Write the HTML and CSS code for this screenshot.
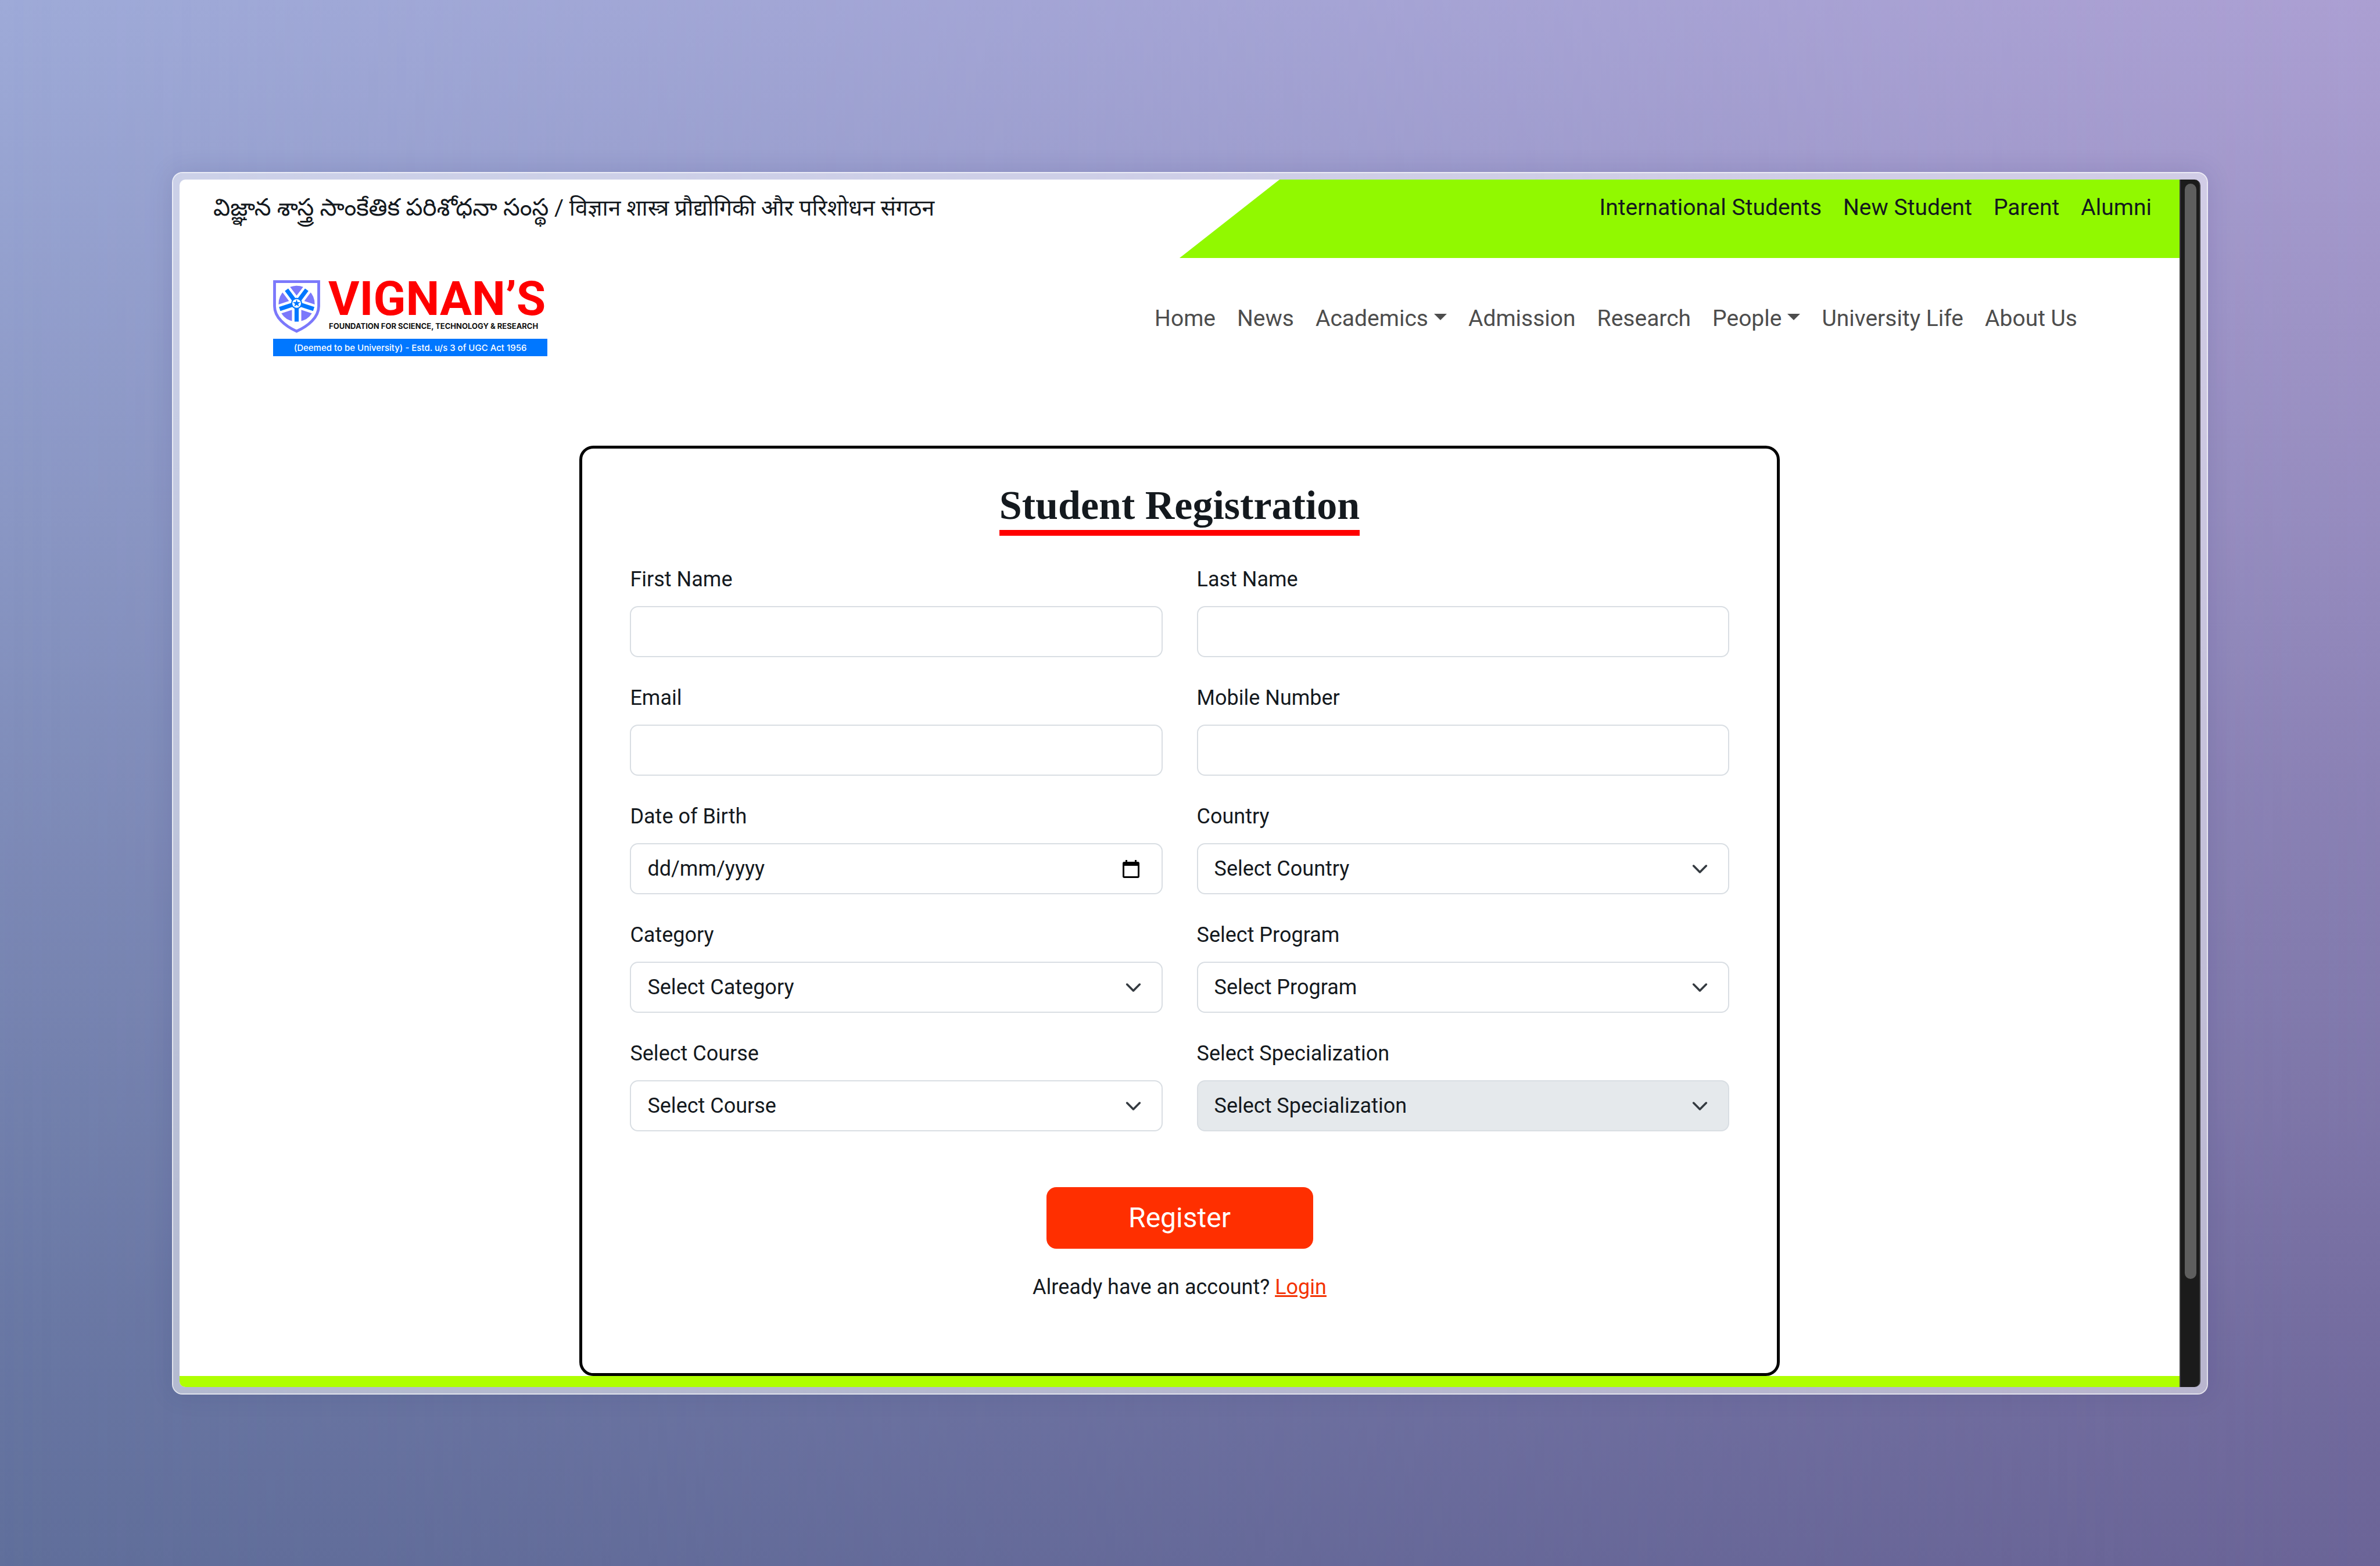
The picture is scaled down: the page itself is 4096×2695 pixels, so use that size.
FILE: index.html
```html
<!DOCTYPE html>
<html lang="en">
<head>
<meta charset="utf-8">
<meta name="viewport" content="width=device-width, initial-scale=1">
<title>Student Registration</title>
<link rel="stylesheet" href="styles.css">
</head>
<body>
<div class="window">
  <div class="page">
    <div class="topbar">
      <p class="motto"><span class="telugu" lang="te">విజ్ఞాన శాస్త్ర సాంకేతిక పరిశోధనా సంస్థ</span> / <span lang="hi">विज्ञान शास्त्र प्रौद्योगिकी और परिशोधन संगठन</span></p>
      <nav class="quick-links" aria-label="Quick links">
        <a href="#">International Students</a>
        <a href="#">New Student</a>
        <a href="#">Parent</a>
        <a href="#">Alumni</a>
      </nav>
    </div>

    <header class="header">
      <a class="logo" href="#" aria-label="Vignan's home">
        <svg width="472" height="132" viewBox="0 0 472 132">
          <svg x="0" y="0" width="81" height="91" viewBox="30 22 302 340">
            <path d="M39 32H323V190C323 262 255 318 181 351C107 318 39 262 39 190Z" fill="#fff" stroke="#7b78fb" stroke-width="18"/>
            <circle cx="181" cy="174" r="116" fill="#7b78fb"/>
            <path d="M181 172V300M181 172L109 76M181 172L253 76M181 172L60 212M181 172L302 212" stroke="#fff" stroke-width="60"/>
            <path d="M181 172V289M181 172L116 84M181 172L246 84M181 172L72 208M181 172L291 208" stroke="#0077ff" stroke-width="27"/>
            <circle cx="181" cy="172" r="36" fill="#0077ff"/>
            <circle cx="181" cy="172" r="28" fill="#fff"/>
            <path d="M181 147L187 164H205L191 175L196 192L181 182L166 192L171 175L157 164H175Z" fill="#0077ff"/>
          </svg>
          <text class="logo-name" x="95" y="60">VIGNAN’S</text>
          <text class="logo-sub" x="96" y="84">FOUNDATION FOR SCIENCE, TECHNOLOGY &amp; RESEARCH</text>
          <rect y="101" width="472" height="30" fill="#0077ff"/>
          <text class="logo-note" x="236" y="122">(Deemed to be University) - Estd. u/s 3 of UGC Act 1956</text>
        </svg>
      </a>
      <nav class="menu" aria-label="Main">
        <a href="#">Home</a>
        <a href="#">News</a>
        <a href="#" class="has-menu">Academics</a>
        <a href="#">Admission</a>
        <a href="#">Research</a>
        <a href="#" class="has-menu">People</a>
        <a href="#">University Life</a>
        <a href="#">About Us</a>
      </nav>
    </header>

    <main class="main">
      <form class="card">
        <h1 class="title">Student Registration</h1>
        <div class="fields">
          <div class="field">
            <label for="first">First Name</label>
            <input id="first" type="text">
          </div>
          <div class="field">
            <label for="last">Last Name</label>
            <input id="last" type="text">
          </div>
          <div class="field">
            <label for="email">Email</label>
            <input id="email" type="email">
          </div>
          <div class="field">
            <label for="mobile">Mobile Number</label>
            <input id="mobile" type="tel">
          </div>
          <div class="field">
            <label for="dob">Date of Birth</label>
            <div class="control">
              <input id="dob" type="text" inputmode="numeric" placeholder="dd/mm/yyyy">
              <svg class="calendar" viewBox="0 0 29 31" aria-hidden="true"><path d="M5 0h3v3h13V0h3v3h2q3 0 3 3v22q0 3-3 3H3q-3 0-3-3V6q0-3 3-3h2zM3 10v18h23V10z" fill="#000" fill-rule="evenodd"/></svg>
            </div>
          </div>
          <div class="field">
            <label for="country">Country</label>
            <div class="control">
              <select id="country"><option>Select Country</option></select>
              <svg class="chevron" viewBox="0 0 16 16" aria-hidden="true"><path d="m2 5 6 6 6-6"/></svg>
            </div>
          </div>
          <div class="field">
            <label for="category">Category</label>
            <div class="control">
              <select id="category"><option>Select Category</option></select>
              <svg class="chevron" viewBox="0 0 16 16" aria-hidden="true"><path d="m2 5 6 6 6-6"/></svg>
            </div>
          </div>
          <div class="field">
            <label for="program">Select Program</label>
            <div class="control">
              <select id="program"><option>Select Program</option></select>
              <svg class="chevron" viewBox="0 0 16 16" aria-hidden="true"><path d="m2 5 6 6 6-6"/></svg>
            </div>
          </div>
          <div class="field">
            <label for="course">Select Course</label>
            <div class="control">
              <select id="course"><option>Select Course</option></select>
              <svg class="chevron" viewBox="0 0 16 16" aria-hidden="true"><path d="m2 5 6 6 6-6"/></svg>
            </div>
          </div>
          <div class="field">
            <label for="specialization">Select Specialization</label>
            <div class="control">
              <select id="specialization" disabled><option>Select Specialization</option></select>
              <svg class="chevron" viewBox="0 0 16 16" aria-hidden="true"><path d="m2 5 6 6 6-6"/></svg>
            </div>
          </div>
        </div>
        <button class="register" type="submit">Register</button>
        <p class="login">Already have an account? <a href="#">Login</a></p>
      </form>
    </main>
    <footer class="footer"></footer>
  </div>
  <div class="scrollbar" aria-hidden="true"><div class="thumb"></div></div>
</div>
</body>
</html>
```
FILE: styles.css
```css
* {
  box-sizing: border-box;
}

body {
  margin: 0;
  min-height: 100vh;
  padding: 296px 296px 295px;
  display: flex;
  position: relative;
  background: linear-gradient(#9eaad8, #606f9b);
  color: #14191e;
  font: 36px/54px Roboto, sans-serif;
}

body::before {
  content: "";
  position: absolute;
  inset: 0;
  background: linear-gradient(#ab9fd2, #6b6497);
  -webkit-mask-image: linear-gradient(to right, transparent, #000);
  mask-image: linear-gradient(to right, transparent, #000);
}

p,
h1 {
  margin: 0;
}

.window {
  position: relative;
  flex: 1;
  display: flex;
  padding: 11px;
  border: 2px solid rgba(255, 255, 255, 0.8);
  border-radius: 18px;
  background: rgba(255, 255, 255, 0.5);
  background-clip: padding-box;
  box-shadow: 0 0 40px rgba(40, 50, 110, 0.15);
}

.page {
  flex: 1;
  display: flex;
  flex-direction: column;
  border-radius: 10px 0 0 10px;
  overflow: hidden;
  background: #fff;
}

/* Top strip */
.topbar {
  display: grid;
  grid-template-columns: 1fr 1fr;
  height: 135px;
  font-size: 39px;
  line-height: 58px;
}

.motto {
  padding: 19px 0 0 58px;
  font-family: Roboto, "Noto Sans", "Noto Sans Telugu", "Noto Sans Devanagari", sans-serif;
  white-space: nowrap;
}

.telugu {
  font-size: 41px;
}

.quick-links {
  display: flex;
  justify-content: flex-end;
  gap: 37px;
  padding: 19px 48px 0 0;
  background: #91f900;
  clip-path: polygon(10% 0, 100% 0, 100% 100%, 0 100%);
}

.quick-links a {
  color: inherit;
  text-decoration: none;
}

/* Logo and main menu */
.header {
  display: flex;
  justify-content: space-between;
  align-items: center;
  height: 208px;
  padding: 0 176px 0 161px;
}

.logo svg {
  display: block;
}

.logo-name {
  fill: #f00;
  font: 700 82px Roboto, sans-serif;
}

.logo-sub {
  fill: #111;
  font: 700 13px Inter, sans-serif;
}

.logo-note {
  fill: #fff;
  font: 500 15px Inter, sans-serif;
  text-anchor: middle;
}

.menu {
  display: flex;
  gap: 37px;
  font-size: 39px;
  line-height: 58px;
}

.menu a {
  color: #4d4d4d;
  text-decoration: none;
}

.has-menu::after {
  content: "";
  display: inline-block;
  margin-left: 10px;
  vertical-align: 10px;
  border: 11px solid transparent;
  border-top-color: currentColor;
  border-bottom: 0;
}

/* Registration card */
.main {
  padding-top: 115px;
}

.card {
  display: flex;
  flex-direction: column;
  align-items: center;
  width: 60%;
  margin: 0 auto;
  padding: 56px 82px 121px;
  border: 5px solid #000;
  border-radius: 24px;
}

.title {
  margin-bottom: 48px;
  border-bottom: 10px solid #f00;
  font: 700 70px/84px "Liberation Serif", serif;
}

.fields {
  align-self: stretch;
  display: grid;
  grid-template-columns: 1fr 1fr;
  gap: 43px 59px;
}

.field {
  display: flex;
  flex-direction: column;
  gap: 19px;
}

.field input,
.field select {
  width: 100%;
  height: 88px;
  padding: 0 28px;
  border: 2px solid #d9dee3;
  border-radius: 14px;
  background: #fff;
  color: #14191e;
  font: inherit;
  appearance: none;
  opacity: 1;
}

.field input::placeholder {
  color: #14191e;
  opacity: 1;
}

.field select:disabled {
  background: #e5e9ec;
}

.control {
  display: grid;
  align-items: center;
  justify-items: end;
}

.control > * {
  grid-area: 1 / 1;
}

.control svg {
  pointer-events: none;
}

.chevron {
  width: 29px;
  height: 29px;
  margin-right: 36px;
  fill: none;
  stroke: #343a40;
  stroke-width: 2;
  stroke-linecap: round;
  stroke-linejoin: round;
}

.calendar {
  width: 29px;
  height: 31px;
  margin-right: 40px;
}

.register {
  width: 459px;
  height: 106px;
  margin: 96px 0 39px;
  padding: 0;
  border: 0;
  border-radius: 17px;
  background: #ff2f00;
  color: #fff;
  font: 48px/58px Roboto, sans-serif;
}

.login a {
  color: #f33303;
}

.footer {
  flex: 1;
  min-height: 18px;
  background: #afff00;
}

/* Scrollbar */
.scrollbar {
  width: 36px;
  padding: 7px 5px 0 7px;
  border: solid #3a3a3c;
  border-width: 0 2px;
  border-radius: 0 10px 10px 0;
  background: #1b1b1b;
}

.thumb {
  height: 91%;
  border-radius: 10px;
  background: #5e5e5e;
}
```
